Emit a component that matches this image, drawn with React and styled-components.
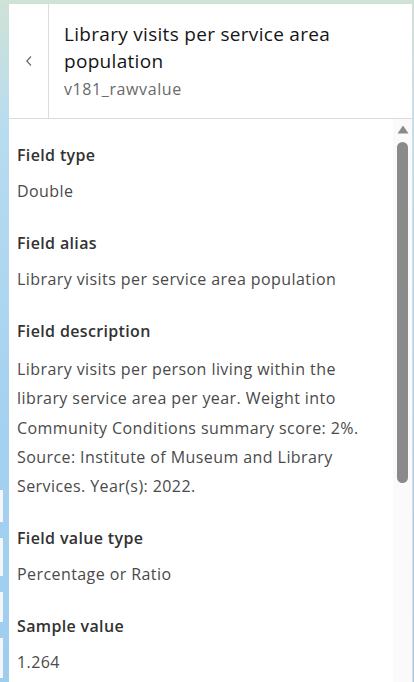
import React from "react";
import styled, { createGlobalStyle } from "styled-components";

const Global = createGlobalStyle`
  html, body { margin: 0; padding: 0; }
  body {
    width: 414px;
    height: 682px;
    overflow: hidden;
    font-family: "Open Sans", "Noto Sans", sans-serif;
    background: linear-gradient(180deg, #cfe3d6 0px, #b9dcef 120px, #a6d2f0 400px, #9ecdf0 682px);
  }
`;

const Stage = styled.div`
  height: 682px;
  box-sizing: border-box;
  padding: 4px 1px 0 9px;
  display: flex;
  position: relative;
`;

const MapControls = styled.div`
  position: absolute;
  left: 0;
  top: 490px;
  display: flex;
  flex-direction: column;
  gap: 16px;
`;

const MapControl = styled.div`
  width: 3px;
  height: ${(p) => p.h}px;
  background: #f4f6f7;
`;

const Panel = styled.div`
  flex: 1;
  display: flex;
  flex-direction: column;
  background: #ffffff;
  border-right: 1px solid #dcdcdc;
  overflow: hidden;
`;

const Header = styled.header`
  display: flex;
  height: 114px;
  flex-shrink: 0;
  border-bottom: 1px solid #dcdcdc;
`;

const BackButton = styled.button`
  width: 40px;
  flex-shrink: 0;
  border: 0;
  border-right: 1px solid #dcdcdc;
  background: #fff;
  padding: 0;
  display: flex;
  align-items: center;
  justify-content: center;
  color: #6a6a6a;
`;

const HeaderText = styled.div`
  display: flex;
  flex-direction: column;
  justify-content: center;
  padding: 0 12px 0 15px;
`;

const Title = styled.h1`
  margin: 0;
  font-size: 19px;
  font-weight: 500;
  letter-spacing: 0.3px;
  line-height: 27px;
  color: #151515;
`;

const Subtitle = styled.div`
  font-size: 16px;
  letter-spacing: 0.6px;
  line-height: 24px;
  color: #6a6a6a;
  margin-top: 2px;
`;

const Body = styled.div`
  flex: 1;
  display: flex;
  min-height: 0;
`;

const Content = styled.div`
  flex: 1;
  padding: 24px 8px 0 8px;
  display: flex;
  flex-direction: column;
`;

const Section = styled.section`
  display: flex;
  flex-direction: column;
  gap: 12px;
  margin-bottom: ${(p) => p.mb ?? 28}px;
`;

const Label = styled.div`
  font-size: 16px;
  line-height: 24px;
  font-weight: 600;
  letter-spacing: 0.35px;
  color: #323232;
`;

const Value = styled.div`
  font-size: 16px;
  letter-spacing: 0.42px;
  line-height: ${(p) => (p.multi ? "29.25px" : "24px")};
  color: #4a4a4a;
`;

const ScrollTrack = styled.div`
  width: 19px;
  flex-shrink: 0;
  background: #fafafa;
  display: flex;
  flex-direction: column;
  align-items: center;
  padding-top: 6px;
  gap: 8px;
`;

const ScrollThumb = styled.div`
  width: 11px;
  height: 341px;
  border-radius: 6px;
  background: #8a8a8a;
`;

const fields = [
  { label: "Field type", value: "Double" },
  { label: "Field alias", value: "Library visits per service area population" },
  {
    label: "Field description",
    value:
      "Library visits per person living within the library service area per year. Weight into Community Conditions summary score: 2%. Source: Institute of Museum and Library Services. Year(s): 2022.",
    multi: true,
    mb: 25,
  },
  { label: "Field value type", value: "Percentage or Ratio" },
  { label: "Sample value", value: "1.264" },
];

export default function App() {
  return (
    <>
      <Global />
      <Stage>
        <MapControls>
          <MapControl h={32} />
          <MapControl h={38} />
          <MapControl h={30} />
          <MapControl h={40} />
        </MapControls>
        <Panel>
          <Header>
            <BackButton aria-label="Back">
              <svg width="8" height="12" viewBox="0 0 8 12" fill="none">
                <path d="M6 1.5 L1.8 6 L6 10.5" stroke="#6a6a6a" strokeWidth="1.2" />
              </svg>
            </BackButton>
            <HeaderText>
              <Title>Library visits per service area population</Title>
              <Subtitle>v181_rawvalue</Subtitle>
            </HeaderText>
          </Header>
          <Body>
            <Content>
              {fields.map((f) => (
                <Section key={f.label} mb={f.mb}>
                  <Label>{f.label}</Label>
                  <Value multi={f.multi}>{f.value}</Value>
                </Section>
              ))}
            </Content>
            <ScrollTrack>
              <svg width="12" height="9" viewBox="0 0 12 9">
                <path d="M6 0.5 L11.5 8.5 L0.5 8.5 Z" fill="#8a8a8a" />
              </svg>
              <ScrollThumb />
            </ScrollTrack>
          </Body>
        </Panel>
      </Stage>
    </>
  );
}
